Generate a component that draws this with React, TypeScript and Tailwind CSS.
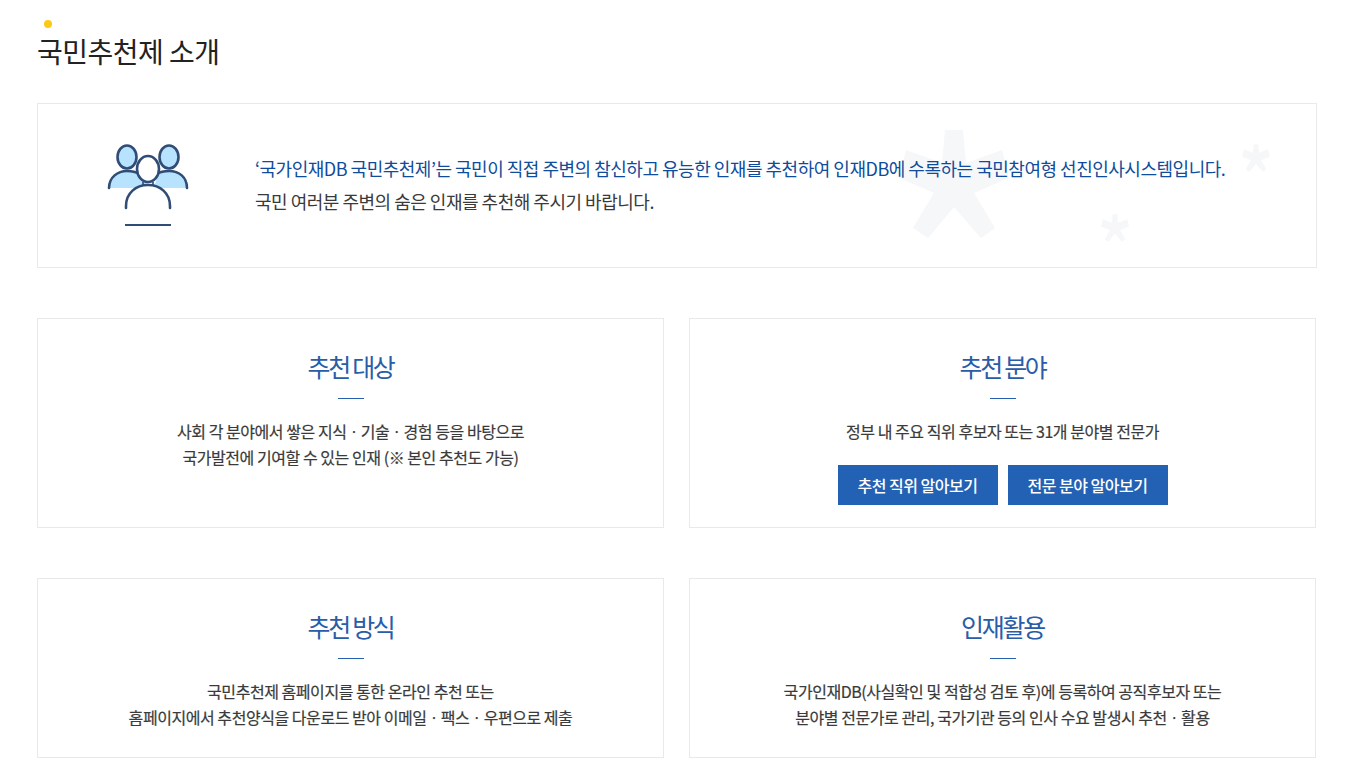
import React from "react";

const font = { fontFamily: '"Noto Sans CJK KR", "Noto Sans", sans-serif' };

function Star({ className }: { className: string }) {
  return (
    <svg viewBox="0 0 110 108" className={className} fill="#f6f7f9" aria-hidden="true">
      <polygon points="46,0 64,0 67,33 103,20 110,48 75,63 96,98 82,108 55,77 29,108 14,98 35,63 0,48 7,20 43,33" />
    </svg>
  );
}

function PeopleIcon() {
  return (
    <svg viewBox="0 0 120 110" className="w-[120px] h-[110px]" fill="none" stroke="#2f4d75" strokeWidth="2.6">
      <path d="M19 58 C19 47 28 41 37 41 C43 41 48 42 51 45 L58 54 L65 54 L68 45 C71 42 75 41 79 41 C89 41 97 47 97 58 Z" fill="#b8e3ff" stroke="none" />
      <ellipse cx="37" cy="27" rx="9.5" ry="11.5" fill="#b8e3ff" />
      <ellipse cx="79" cy="27" rx="9.5" ry="11.5" fill="#b8e3ff" />
      <path d="M19 58 C19 47 28 41 37 41 C42 41 46 42 49 44" strokeLinecap="round" />
      <path d="M97 58 C97 47 89 41 79 41 C74 41 70 42 67 44" strokeLinecap="round" />
      <ellipse cx="58" cy="39" rx="11" ry="13" fill="#fff" />
      <path d="M36 78 V76 C36 63 46 55 58 55 C70 55 80 63 80 76 V78" fill="#fff" strokeLinecap="round" />
      <path d="M53 52 V55 M63 52 V55" strokeWidth="1.6" />
      <path d="M35 95 H81" strokeWidth="2" />
    </svg>
  );
}

function Card({ title, h, children }: { title: string; h: string; children: React.ReactNode }) {
  return (
    <div className={`border border-[#e9e9e9] bg-white flex flex-col items-center pt-[29px] ${h}`}>
      <h3 className="text-[25px] leading-[36px] font-normal text-[#2a5ca8] tracking-[-2.3px]">{title}</h3>
      <div className="w-[26px] h-px bg-[#2560b0] mt-[14px] mb-[19px]" />
      {children}
    </div>
  );
}

const body = "text-[16px] leading-[26px] text-[#3a3a3a] text-center tracking-[-0.45px] [-webkit-text-stroke:0.2px_#3a3a3a]";
const btn = "w-[160px] h-[40px] bg-[#2361b5] text-white text-[16px] font-medium tracking-[-0.5px]";

export default function App() {
  return (
    <div style={font} className="relative h-[772px] overflow-hidden bg-white pl-[37px] pr-[39px]">
      <div className="relative pt-[30px] h-[103px]">
        <span className="absolute left-[7px] top-[20px] w-2 h-2 rounded-full bg-[#fcc917]" />
        <h2 className="text-[28px] leading-[42px] font-normal text-[#222] tracking-[-0.5px]">국민추천제 소개</h2>
      </div>

      <div className="relative h-[165px] border border-[#e9e9e9] flex items-center overflow-hidden">
        <Star className="absolute left-[861px] top-[26px] w-[110px] h-[108px] overflow-visible" />
        <Star className="absolute left-[1204px] top-[40px] w-[28px] h-[28px] overflow-visible" />
        <Star className="absolute left-[1063px] top-[110px] w-[28px] h-[28px] overflow-visible" />
        <div className="relative w-[217px] h-[110px] shrink-0 pl-[52px] -mt-[1px]">
          <PeopleIcon />
        </div>
        <div className="relative text-[18px] leading-[33px] tracking-[-0.49px] -mt-[1px]">
          <p className="text-[#0f4c9c]">‘국가인재DB 국민추천제’는 국민이 직접 주변의 참신하고 유능한 인재를 추천하여 인재DB에 수록하는 국민참여형 선진인사시스템입니다.</p>
          <p className="text-[#3a3a3a]">국민 여러분 주변의 숨은 인재를 추천해 주시기 바랍니다.</p>
        </div>
      </div>

      <div className="grid grid-cols-[627px_627px] gap-x-[25px] gap-y-[50px] mt-[50px]">
        <Card title="추천 대상" h="h-[210px]">
          <p className={body}>사회 각 분야에서 쌓은 지식ㆍ기술ㆍ경험 등을 바탕으로<br />국가발전에 기여할 수 있는 인재 (※ 본인 추천도 가능)</p>
        </Card>
        <Card title="추천 분야" h="h-[210px]">
          <p className={body}>정부 내 주요 직위 후보자 또는 31개 분야별 전문가</p>
          <div className="flex gap-[10px] mt-[21px]">
            <button className={btn}>추천 직위 알아보기</button>
            <button className={btn}>전문 분야 알아보기</button>
          </div>
        </Card>
        <Card title="추천 방식" h="h-[180px]">
          <p className={body}>국민추천제 홈페이지를 통한 온라인 추천 또는<br />홈페이지에서 추천양식을 다운로드 받아 이메일ㆍ팩스ㆍ우편으로 제출</p>
        </Card>
        <Card title="인재활용" h="h-[180px]">
          <p className={body}>국가인재DB(사실확인 및 적합성 검토 후)에 등록하여 공직후보자 또는<br />분야별 전문가로 관리, 국가기관 등의 인사 수요 발생시 추천ㆍ활용</p>
        </Card>
      </div>
    </div>
  );
}
